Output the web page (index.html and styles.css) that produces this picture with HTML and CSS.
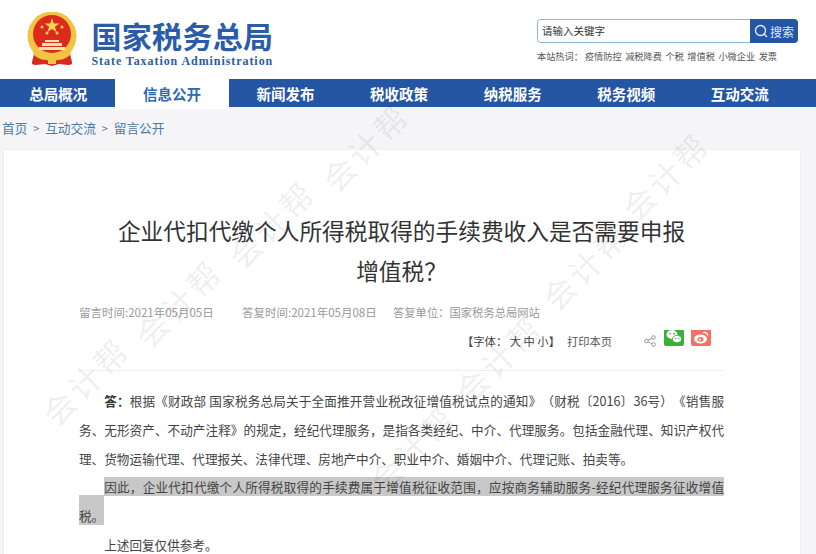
FILE: index.html
```html
<!DOCTYPE html>
<html lang="zh-CN">
<head>
<meta charset="utf-8">
<title>国家税务总局</title>
<link rel="stylesheet" href="styles.css">
</head>
<body>
<header class="top">
  <div class="brand">
    <svg class="emblem" viewBox="0 0 50 54" width="50" height="54" aria-hidden="true">
      <path d="M8 38 L5 50 Q4 53 9 53 L18 52 L25 54 L32 52 L41 53 Q46 53 45 50 L42 38Z" fill="#d92a20"/>
      <circle cx="25" cy="24" r="24.5" fill="#f3c443"/>
      <circle cx="25" cy="22" r="19" fill="#dc2a1e"/>
      <polygon points="25,6 26.8,11.5 32.5,11.5 27.9,14.8 29.7,20.3 25,17 20.3,20.3 22.1,14.8 17.5,11.5 23.2,11.5" fill="#f8d34f"/>
      <circle cx="15" cy="15" r="1.5" fill="#f8d34f"/>
      <circle cx="20" cy="21" r="1.5" fill="#f8d34f"/>
      <circle cx="30" cy="21" r="1.5" fill="#f8d34f"/>
      <circle cx="35" cy="15" r="1.5" fill="#f8d34f"/>
      <path d="M18 28h14v2H18zM15 31h20v3H15zM12 35h26v3H12z" fill="#f8e6a8"/>
      <path d="M7 36 Q14 46 22 43 Q25 39 28 43 Q36 46 43 36 L44 42 Q36 50 28 47 Q25 45 22 47 Q14 50 6 42Z" fill="#f3c443"/>
      <rect x="21" y="47" width="8" height="5" fill="#f3c443"/>
    </svg>
    <div class="brand-text">
      <div class="brand-cn">国家税务总局</div>
      <div class="brand-en">State Taxation Administration</div>
    </div>
  </div>
  <div class="search-area">
    <div class="search">
      <span class="search-input">请输入关键字</span>
      <span class="search-btn">
        <svg viewBox="0 0 14 14" width="14" height="14" aria-hidden="true"><circle cx="6.5" cy="6.5" r="5" fill="none" stroke="#dfe8f5" stroke-width="1.4"/><path d="M10 10l3 3" stroke="#dfe8f5" stroke-width="1.4"/></svg>
        搜索
      </span>
    </div>
    <div class="hot">
      <span>本站热词：</span><span>疫情防控</span><span>减税降费</span><span>个税</span><span>增值税</span><span>小微企业</span><span>发票</span>
    </div>
  </div>
</header>
<nav class="nav">
  <a>总局概况</a><a class="active">信息公开</a><a>新闻发布</a><a>税收政策</a><a>纳税服务</a><a>税务视频</a><a>互动交流</a>
</nav>
<main class="content">
  <div class="crumbs">首页 <i>&gt;</i> 互动交流 <i>&gt;</i> 留言公开</div>
  <article class="card">
    <h1 class="title">企业代扣代缴个人所得税取得的手续费收入是否需要申报<br>增值税？</h1>
    <div class="meta">
      <span class="m1">留言时间:2021年05月05日</span>
      <span class="m2">答复时间:2021年05月08日</span>
      <span>答复单位：国家税务总局网站</span>
    </div>
    <div class="tools">
      <span class="fontsize">【字体： 大 中 小】</span>
      <span class="print">打印本页</span>
      <svg class="share" viewBox="0 0 12 12" width="12" height="12" aria-hidden="true"><path d="M9.5 2.5L2.5 6l7 3.5" fill="none" stroke="#999"/><circle cx="9.5" cy="2.5" r="1.8" fill="#fff" stroke="#999"/><circle cx="2.5" cy="6" r="1.8" fill="#fff" stroke="#999"/><circle cx="9.5" cy="9.5" r="1.8" fill="#fff" stroke="#999"/></svg>
      <svg class="social" viewBox="0 0 20 16" width="20" height="16" aria-hidden="true"><rect y="-3" width="20" height="19" rx="2" fill="#3cb034"/><ellipse cx="8" cy="4.5" rx="5.5" ry="4.4" fill="#fff"/><ellipse cx="13" cy="9" rx="4.6" ry="3.7" fill="#fff" stroke="#3cb034" stroke-width=".8"/><circle cx="6" cy="3.6" r=".9" fill="#3cb034"/><circle cx="10" cy="3.6" r=".9" fill="#3cb034"/><circle cx="11.5" cy="8.5" r=".7" fill="#3cb034"/><circle cx="14.8" cy="8.5" r=".7" fill="#3cb034"/></svg>
      <svg class="social" viewBox="0 0 20 16" width="20" height="16" aria-hidden="true"><rect y="-3" width="20" height="19" rx="2" fill="#f2705f"/><ellipse cx="9.5" cy="9" rx="6.5" ry="4.6" fill="#fff"/><ellipse cx="9.5" cy="9.3" rx="3" ry="2.4" fill="#f2705f"/><circle cx="9" cy="9.5" r="1.1" fill="#fff"/><path d="M12 2.5q4-.8 5 3" fill="none" stroke="#fff" stroke-width="1.2"/></svg>
    </div>
    <div class="body-text">
      <p><b>答：</b>根据《财政部 国家税务总局关于全面推开营业税改征增值税试点的通知》（财税〔2016〕36号）《销售服务、无形资产、不动产注释》的规定，经纪代理服务，是指各类经纪、中介、代理服务。包括金融代理、知识产权代理、货物运输代理、代理报关、法律代理、房地产中介、职业中介、婚姻中介、代理记账、拍卖等。</p>
      <p><mark>因此，企业代扣代缴个人所得税取得的手续费属于增值税征收范围，应按商务辅助服务-经纪代理服务征收增值</mark><mark class="tail">税。</mark></p>
      <p>上述回复仅供参考。</p>
    </div>
  </article>
</main>
<div class="wm" aria-hidden="true">
  <span class="w1">会计帮</span>
  <span class="w2">会计帮</span>
  <span class="w3">会计帮</span>
  <span class="w4">会计帮</span>
  <span class="w5">会计帮</span>
  <span class="w6">会计帮</span>
  <span class="w7">会计帮</span>
  <span class="w8">会计帮</span>
</div>
</body>
</html>
```
FILE: styles.css
```css
html, body { margin: 0; padding: 0; height: 554px; overflow: hidden; }
body { font-family: "Noto Sans CJK SC", "Liberation Sans", sans-serif; background: #f5f5f7; color: #333; position: relative; }
.top { height: 79px; background: #fff; display: flex; justify-content: space-between; box-sizing: border-box; padding: 12px 18px 0 27px; }
.brand { display: flex; gap: 14.5px; align-items: flex-start; }
.emblem { display: block; }
.brand-text { padding-top: 5px; }
.brand-cn { font-size: 30px; line-height: 36px; font-weight: 700; color: #2a5ca8; letter-spacing: .3px; white-space: nowrap; }
.brand-en { margin-top: 1px; font-family: "Liberation Serif", serif; font-size: 12px; line-height: 14px; font-weight: 700; color: #2a5ca8; letter-spacing: .93px; white-space: nowrap; }
.search-area { width: 261px; padding-top: 7px; }
.search { display: flex; height: 24px; border-radius: 4px; overflow: hidden; background: #fff; }
.search-input { flex: 1; border: 1px solid #8db8dc; border-right: 0; border-radius: 4px 0 0 4px; font-size: 10.5px; line-height: 22px; padding-left: 4px; color: #333; }
.search-btn { width: 48px; background: #2456a4; color: #dfe8f5; font-size: 12px; display: flex; align-items: center; justify-content: center; gap: 2px; }
.hot { display: flex; gap: 3.5px; margin-top: 6px; font-size: 9.2px; line-height: 14px; color: #555; white-space: nowrap; }
.hot span:first-child { margin-right: -1.5px; }
.nav { height: 28px; background: #2456a4; display: grid; grid-template-columns: repeat(7, 113.6px); padding-left: 1.5px; }
.nav a { color: #fff; font-size: 14.5px; font-weight: 700; line-height: 30px; text-align: center; }
.nav a.active { background: #fff; color: #2e6bb0; }
.content { padding: 0 15px 0 3px; }
.crumbs { height: 42px; margin-left: -1px; font-size: 12.7px; line-height: 42px; color: #4a7ba6; white-space: nowrap; }
.crumbs i { font-style: normal; font-size: 11px; margin: 0 3px; color: #5a7a9a; }
.card { background: #fff; border: 1px solid #eee; border-bottom: 0; height: 405px; overflow: hidden; box-sizing: border-box; padding: 61px 76px 0 75px; }
.title { margin: 0; font-size: 22.7px; line-height: 40px; font-weight: 400; text-align: center; color: #333; white-space: nowrap; }
.meta { margin-top: 13px; display: flex; font-size: 11.3px; line-height: 16px; color: #999; white-space: nowrap; }
.m1 { width: 163px; font-size: 11.5px; }
.m2 { width: 151px; font-size: 11.5px; }
.tools { margin-top: 12px; height: 17px; display: flex; align-items: center; font-size: 11.3px; color: #444; white-space: nowrap; padding-left: 383px; border-bottom: 1px solid #eee; padding-bottom: 21px; }
.print { margin-left: 7px; margin-right: 32px; color: #555; }
.share { margin-right: 8px; }
.social { margin-right: 7px; margin-top: -5px; }
.body-text { margin-top: 16px; font-size: 12.6px; line-height: 28.8px; color: #444; text-spacing-trim: space-all; }
.body-text p { margin: 0; text-indent: 2em; text-align: justify; }
.body-text b { font-weight: 700; color: #333; }
mark { background: #c8c8c8; color: #444; }
mark.tail { padding-top: 11px; }
.wm { position: absolute; inset: 0; pointer-events: none; overflow: hidden; }
.wm span { position: absolute; font-size: 32px; line-height: 34px; letter-spacing: 4px; color: rgba(0,0,0,.08); transform: translate(-50%, -50%) rotate(-45deg); white-space: nowrap; }
.w1 { left: 85px; top: 380px; }
.w2 { left: 178px; top: 302px; }
.w3 { left: 271px; top: 223px; }
.w4 { left: 365px; top: 146px; }
.w5 { left: 412px; top: 448px; }
.w6 { left: 498px; top: 358px; }
.w7 { left: 585px; top: 265px; }
.w8 { left: 665px; top: 175px; }
```
